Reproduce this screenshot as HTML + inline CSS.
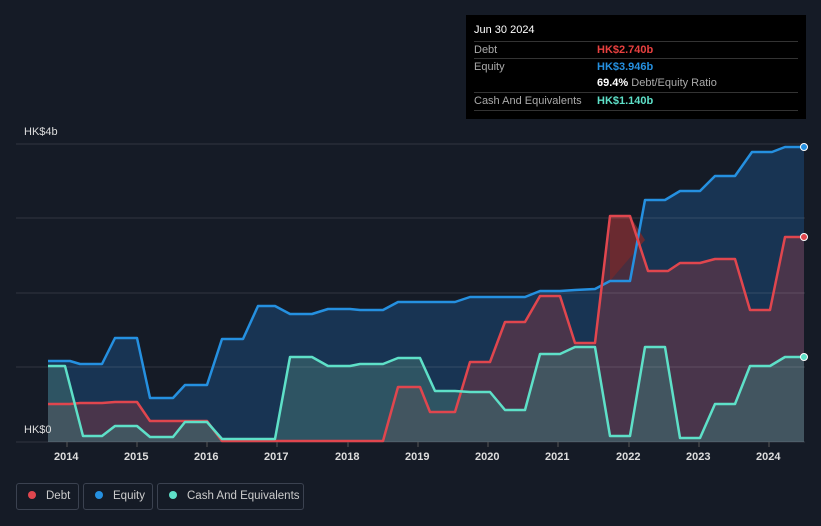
<!DOCTYPE html>
<html><head><style>
html,body{margin:0;width:821px;height:526px;overflow:hidden}
body{background:#151b26;font-family:"Liberation Sans",sans-serif;position:relative}
.tt{position:absolute;left:466px;top:15px;width:340px;height:104px;background:#000;color:#fff;font-size:11px}
.row{position:absolute;left:8px;width:324px;border-top:1px solid #333;height:17px;line-height:17px;color:#aaa}
.lg{position:absolute;top:483px;height:27px;border:1px solid #3b4250;border-radius:3px;color:#ccc;font-size:11.5px;line-height:25px;box-sizing:border-box;white-space:nowrap}
.dot{display:inline-block;width:8px;height:8px;border-radius:50%;margin:0 10px 0 11px;vertical-align:0px}
.ax{position:absolute;top:451px;color:#ddd;font-size:11px;font-weight:bold}
</style></head><body>
<svg width="821" height="526" style="position:absolute;left:0;top:0">
<path d="M48,361 70,361 80,364 102,364 115,338 137,338 150,398 173,398 185,385 207,385 222,339 243,339 258,306 275,306 290,314 312,314 328,309 350,309 360,310 383,310 398,302 455,302 470,297 525,297 540,291 560,291 575,290 595,289 610,281 630,281 645,200 665,200 680,191 700,191 715,176 735,176 752,152 772,152 785,147 804,147 L804,442 48,442Z" fill="#183453"/>
<path d="M48,404 70,404 80,403 102,403 115,402 137,402 150,421 207,421 222,441 383,441 398,387 420,387 430,412 455,412 470,362 490,362 505,322 525,322 540,296 560,296 575,343 595,343 610,216 630,216 648,271 668,271 680,263 700,263 715,259 735,259 750,310 770,310 785,237 804,237 L804,442 48,442Z" fill="#5a3548" fill-opacity="0.75"/>
<path d="M48,366 65,366 83,436 102,436 115,426 137,426 150,437 173,437 185,422 207,422 222,439 275,439 290,357 312,357 328,366 350,366 360,364 383,364 398,358 420,358 435,391 455,391 470,392 490,392 505,410 525,410 540,354 560,354 575,347 595,347 610,436 630,436 645,347 665,347 680,438 700,438 715,404 735,404 750,366 770,366 785,357 804,357 L804,442 48,442Z" fill="#3d6b6e" fill-opacity="0.6"/>
<path d="M610,281 610,216 630,216 645,240Z" fill="#6a2a30"/>
<g stroke="#ffffff" stroke-opacity="0.12" stroke-width="1">
<line x1="16" y1="144" x2="805" y2="144"/><line x1="16" y1="218" x2="805" y2="218"/><line x1="16" y1="293" x2="805" y2="293"/><line x1="16" y1="367" x2="805" y2="367"/><line x1="16" y1="442" x2="805" y2="442"/>
</g>
<g fill="none" stroke-width="2.5" stroke-linejoin="round">
<path d="M48,361 70,361 80,364 102,364 115,338 137,338 150,398 173,398 185,385 207,385 222,339 243,339 258,306 275,306 290,314 312,314 328,309 350,309 360,310 383,310 398,302 455,302 470,297 525,297 540,291 560,291 575,290 595,289 610,281 630,281 645,200 665,200 680,191 700,191 715,176 735,176 752,152 772,152 785,147 804,147" stroke="#2590e0"/>
<path d="M48,404 70,404 80,403 102,403 115,402 137,402 150,421 207,421 222,441 383,441 398,387 420,387 430,412 455,412 470,362 490,362 505,322 525,322 540,296 560,296 575,343 595,343 610,216 630,216 648,271 668,271 680,263 700,263 715,259 735,259 750,310 770,310 785,237 804,237" stroke="#e0464e"/>
<path d="M48,366 65,366 83,436 102,436 115,426 137,426 150,437 173,437 185,422 207,422 222,439 275,439 290,357 312,357 328,366 350,366 360,364 383,364 398,358 420,358 435,391 455,391 470,392 490,392 505,410 525,410 540,354 560,354 575,347 595,347 610,436 630,436 645,347 665,347 680,438 700,438 715,404 735,404 750,366 770,366 785,357 804,357" stroke="#5ee0c8"/>
</g>
<circle cx="804" cy="147" r="3.5" fill="#2590e0" stroke="#fff"/>
<circle cx="804" cy="237" r="3.5" fill="#e0464e" stroke="#fff"/>
<circle cx="804" cy="357" r="3.5" fill="#5ee0c8" stroke="#fff"/>
<g stroke="#555"><line x1="67" y1="442" x2="67" y2="447"/><line x1="137" y1="442" x2="137" y2="447"/><line x1="207" y1="442" x2="207" y2="447"/><line x1="277" y1="442" x2="277" y2="447"/><line x1="348" y1="442" x2="348" y2="447"/><line x1="418" y1="442" x2="418" y2="447"/><line x1="488" y1="442" x2="488" y2="447"/><line x1="558" y1="442" x2="558" y2="447"/><line x1="629" y1="442" x2="629" y2="447"/><line x1="699" y1="442" x2="699" y2="447"/><line x1="769" y1="442" x2="769" y2="447"/></g>
</svg>
<div style="position:absolute;left:24px;top:126px;color:#ddd;font-size:11px">HK$4b</div>
<div style="position:absolute;left:24px;top:424px;color:#ddd;font-size:11px">HK$0</div>
<div class="ax" style="left:54px">2014</div><div class="ax" style="left:124px">2015</div><div class="ax" style="left:194px">2016</div><div class="ax" style="left:264px">2017</div><div class="ax" style="left:335px">2018</div><div class="ax" style="left:405px">2019</div><div class="ax" style="left:475px">2020</div><div class="ax" style="left:545px">2021</div><div class="ax" style="left:616px">2022</div><div class="ax" style="left:686px">2023</div><div class="ax" style="left:756px">2024</div>
<div class="tt">
<div style="position:absolute;left:8px;top:9px">Jun 30 2024</div>
<div class="row" style="top:26px">Debt<span style="position:absolute;left:123px;color:#e8403f;font-weight:bold">HK$2.740b</span></div>
<div class="row" style="top:43px">Equity<span style="position:absolute;left:123px;color:#2590e0;font-weight:bold">HK$3.946b</span></div>
<div class="row" style="top:60px;border:none"><span style="position:absolute;left:123px;color:#aaa"><b style="color:#fff">69.4%</b> Debt/Equity Ratio</span></div>
<div class="row" style="top:77px">Cash And Equivalents<span style="position:absolute;left:123px;color:#5ee0c8;font-weight:bold">HK$1.140b</span></div>
<div class="row" style="top:95px;height:0"></div>
</div>
<div class="lg" style="left:16px;width:63px"><span class="dot" style="background:#e0464e"></span>Debt</div>
<div class="lg" style="left:83px;width:70px"><span class="dot" style="background:#2590e0"></span>Equity</div>
<div class="lg" style="left:157px;width:147px"><span class="dot" style="background:#5ee0c8"></span>Cash And Equivalents</div>
</body></html>
